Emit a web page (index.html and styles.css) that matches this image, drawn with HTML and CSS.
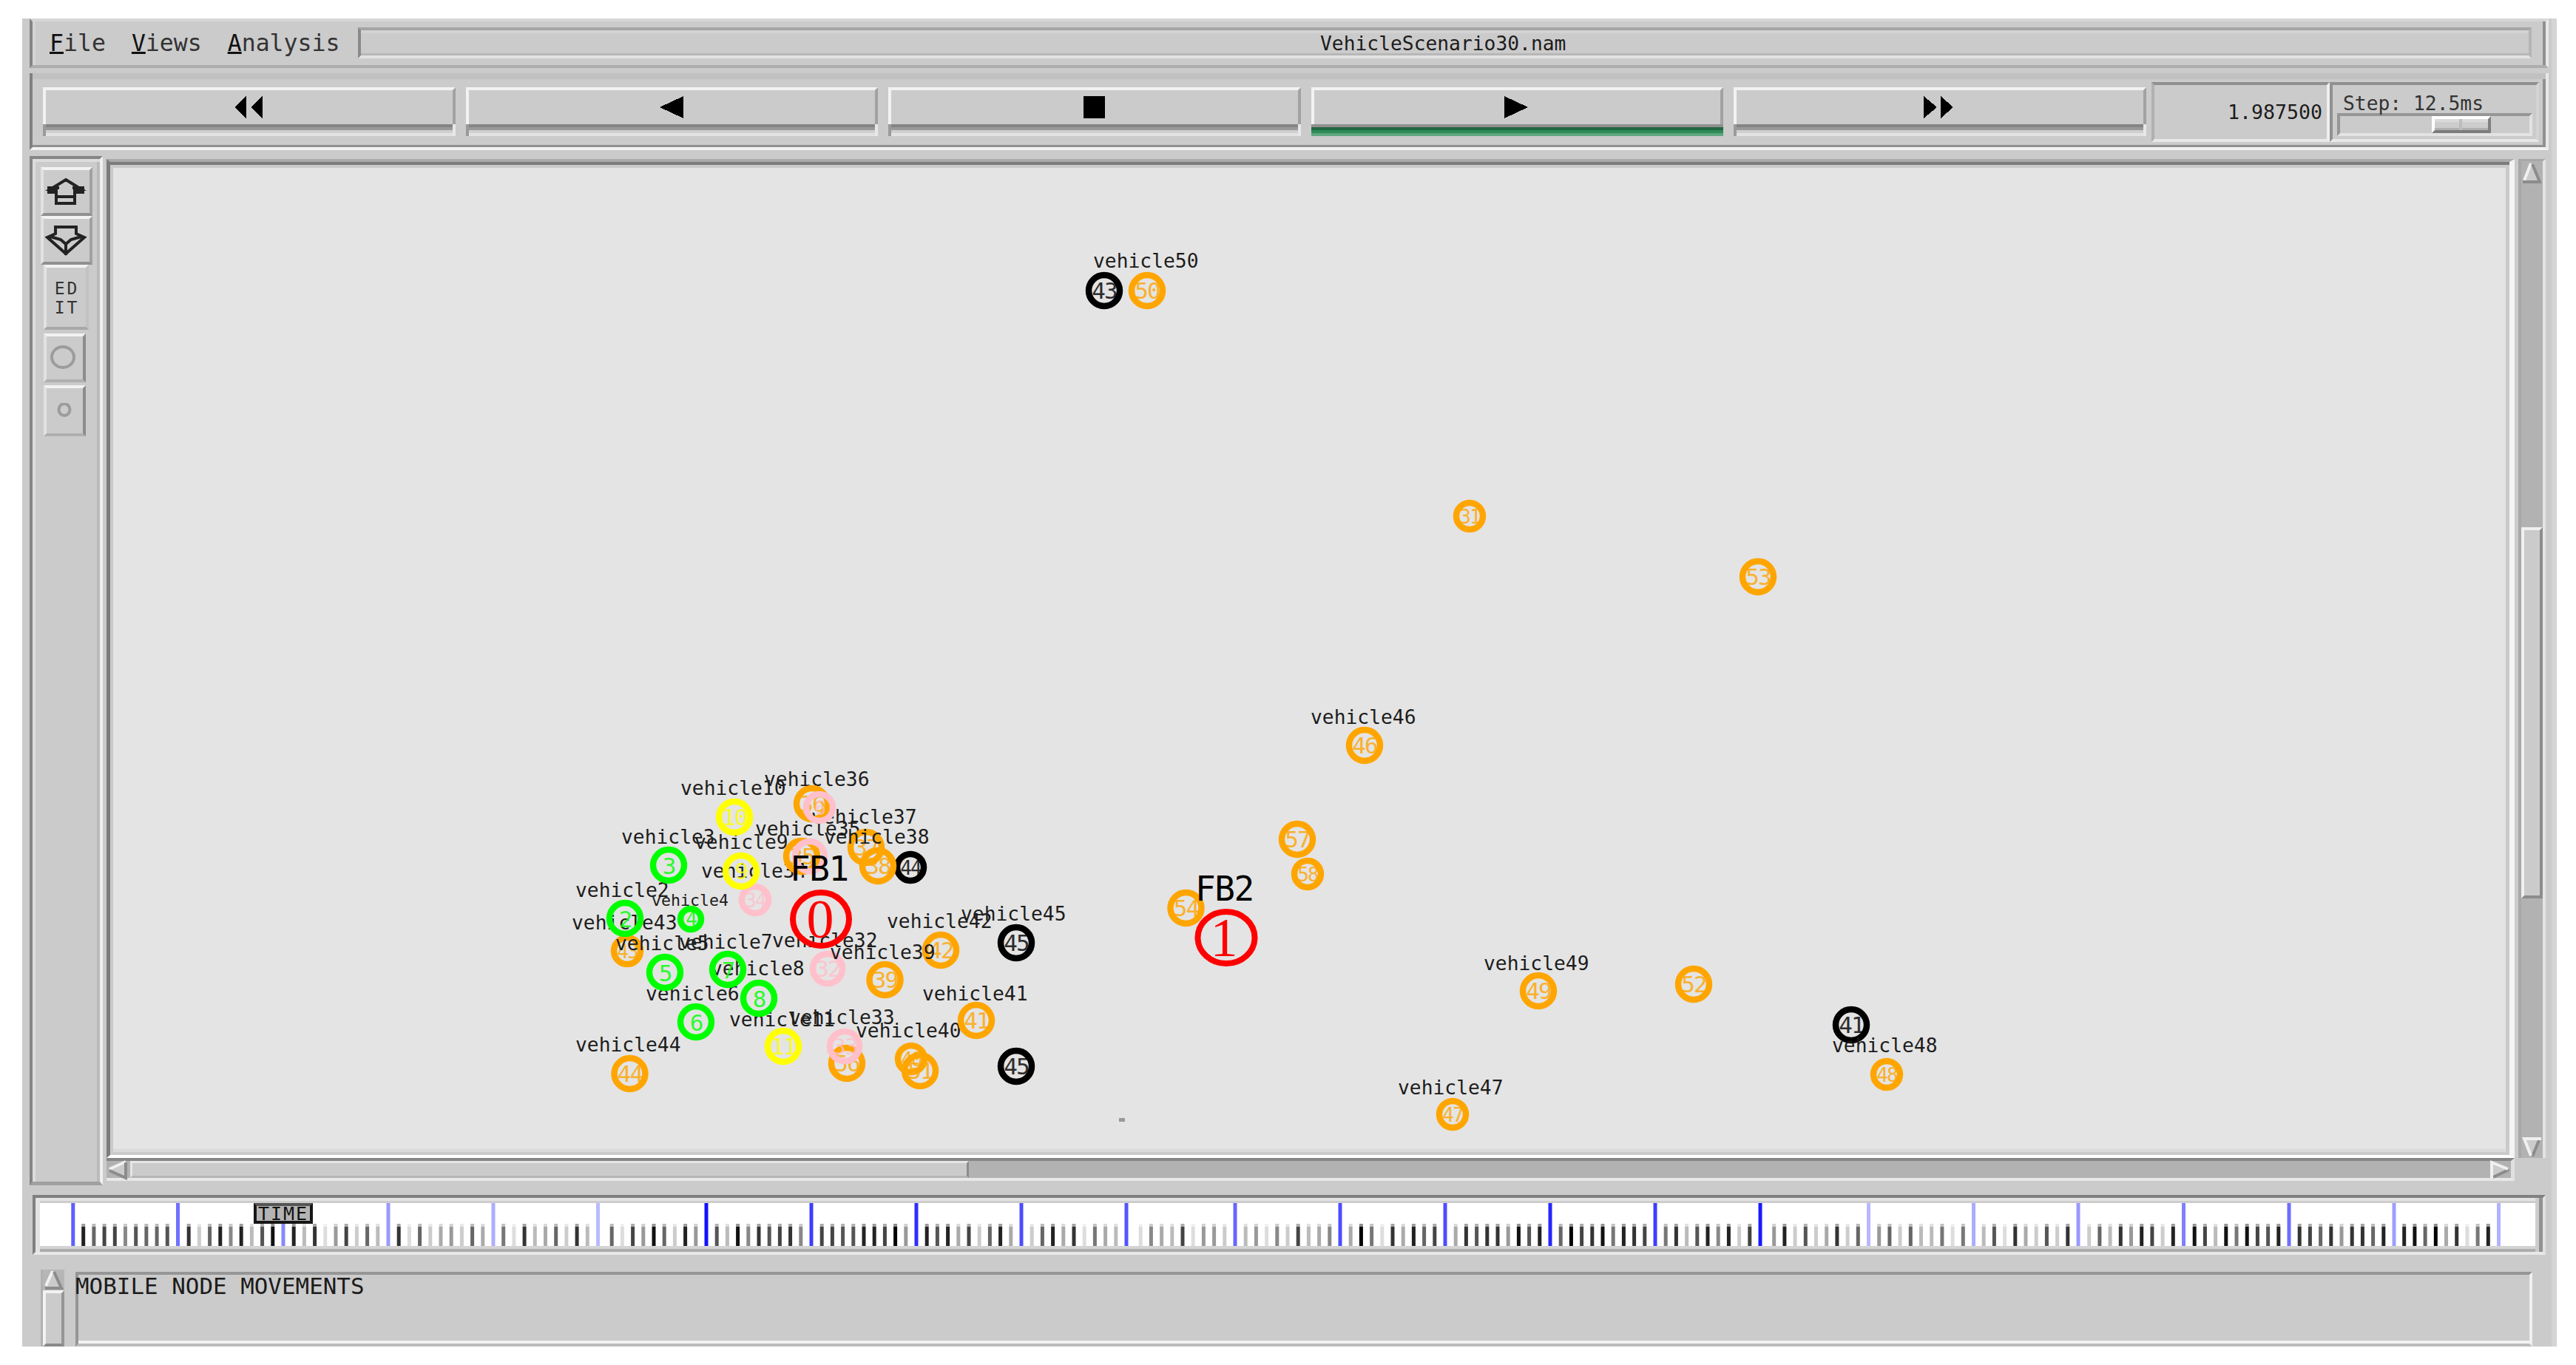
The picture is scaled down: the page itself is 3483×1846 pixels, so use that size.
FILE: index.html
```html
<!DOCTYPE html>
<html lang="en">
<head>
<meta charset="utf-8">
<title>nam: VehicleScenario30.nam</title>
<link rel="stylesheet" href="styles.css">
</head>
<body>
<div class="window">
  <header class="menubar">
    <span class="menu"><u>F</u>ile</span><span class="menu"><u>V</u>iews</span><span class="menu"><u>A</u>nalysis</span>
    <div class="filename">VehicleScenario30.nam</div>
  </header>
  <div class="toolbar">
    <div class="buttons">
      <div class="button"><div class="face"><svg width="40" height="30" shape-rendering="crispEdges"><path d="M0 15 16 0v30zM22 15 38 0v30z"/></svg></div><div class="strip"></div></div>
      <div class="button"><div class="face"><svg width="32" height="30" shape-rendering="crispEdges"><path d="M0 15 32 0v30z"/></svg></div><div class="strip"></div></div>
      <div class="button"><div class="face"><svg width="30" height="30"><path d="M0 0h29v30h-29z"/></svg></div><div class="strip"></div></div>
      <div class="button active"><div class="face"><svg width="36" height="30" shape-rendering="crispEdges"><path d="M32 15 0 0v30z"/></svg></div><div class="strip"></div></div>
      <div class="button"><div class="face"><svg width="44" height="30" shape-rendering="crispEdges"><path d="M18 15 0 0v30zM40 15 23 0v30z"/></svg></div><div class="strip"></div></div>
    </div>
    <div class="time">1.987500</div>
    <div class="step">
      <div class="step-label">Step: 12.5ms</div>
      <div class="trough"><div class="slider"></div></div>
    </div>
  </div>
  <main class="main">
    <aside class="tools">
      <div class="tool wide"><svg width="58" height="38" viewBox="0 0 58 38"><path d="M29 3 50 16H41V35H16V16H8ZM16 26H41" /><path d="M4 14H20M38 14H54M4 20H14M43 20H54"/></svg></div>
      <div class="tool wide"><svg width="58" height="42" viewBox="0 0 58 42"><path d="M15 3H43V12L54 17 29 39 4 17 15 12ZM8 16 22 20 29 26 36 20 50 16M29 26V41"/></svg></div>
      <div class="tool edit"><span>ED</span><span>IT</span></div>
      <div class="tool dim big"><svg width="38" height="34"><ellipse cx="18" cy="16" rx="15" ry="14"/></svg></div>
      <div class="tool dim small"><svg width="24" height="22"><ellipse cx="12" cy="9" rx="7.5" ry="8"/></svg></div>
    </aside>
    <div class="view">
      <div class="canvas">
        <svg class="network" viewBox="153 227 3235 1327" width="3235" height="1327">
          <g class="label">
            <text x="920" y="1075">vehicle10</text>
            <text x="1033" y="1063">vehicle36</text>
            <text x="840" y="1141">vehicle3</text>
            <text x="939" y="1148">vehicle9</text>
            <text x="1097" y="1114">vehicle37</text>
            <text x="1021" y="1130">vehicle35</text>
            <text x="948" y="1187">vehicle34</text>
            <text x="778" y="1213">vehicle2</text>
            <text class="mini" x="881" y="1225">vehicle4</text>
            <text x="773" y="1257">vehicle43</text>
            <text x="918" y="1283">vehicle7</text>
            <text x="1044" y="1281">vehicle32</text>
            <text x="961" y="1319">vehicle8</text>
            <text x="873" y="1353">vehicle6</text>
            <text x="986" y="1388">vehicle11</text>
            <text x="1067" y="1385">vehicle33</text>
            <text x="1157" y="1403">vehicle40</text>
            <text x="1199" y="1255">vehicle42</text>
            <text x="1299" y="1245">vehicle45</text>
            <text x="1247" y="1353">vehicle41</text>
            <text x="778" y="1422">vehicle44</text>
            <text x="1772" y="979">vehicle46</text>
            <text x="1890" y="1480">vehicle47</text>
            <text x="2006" y="1312">vehicle49</text>
            <text x="1478" y="362">vehicle50</text>
          </g>
          <g class="node orange">
            <circle cx="1098" cy="1087" r="21"/><text x="1098" y="1098">36</text>
            <circle cx="1084" cy="1158" r="21"/><text x="1084" y="1169">35</text>
            <circle cx="848" cy="1286" r="18"/><text class="s" x="848" y="1296">43</text>
            <circle cx="851.5" cy="1452" r="21"/><text x="851.5" y="1463">44</text>
            <circle cx="1171" cy="1146" r="21"/><text x="1171" y="1157">37</text>
            <circle cx="1272" cy="1285" r="21"/><text x="1272" y="1296">42</text>
            <circle cx="1196.500" cy="1325" r="21"/><text x="1196.500" y="1336">39</text>
            <circle cx="1320" cy="1380" r="21"/><text x="1320" y="1391">41</text>
            <circle cx="1232" cy="1432" r="18"/><text class="s" x="1232" y="1442">40</text>
            <circle cx="1244" cy="1448" r="21"/><text x="1244" y="1459">51</text>
            <circle cx="1845" cy="1008" r="21"/><text x="1845" y="1019">46</text>
            <circle cx="1754" cy="1135" r="21"/><text x="1754" y="1146">57</text>
            <circle cx="1768" cy="1182" r="18"/><text class="s" x="1768" y="1192">58</text>
            <circle cx="1603.500" cy="1228" r="21"/><text x="1603.500" y="1239">54</text>
            <circle cx="1964" cy="1507" r="18"/><text class="s" x="1964" y="1517">47</text>
            <circle cx="1987" cy="698" r="18"/><text class="s" x="1987" y="708">31</text>
            <circle cx="2377" cy="780" r="21"/><text x="2377" y="791">53</text>
            <circle cx="2080" cy="1340" r="21"/><text x="2080" y="1351">49</text>
            <circle cx="2290" cy="1331" r="21"/><text x="2290" y="1342">52</text>
            <circle cx="2551" cy="1453" r="18"/><text class="s" x="2551" y="1463">48</text>
            <circle cx="1551" cy="393" r="21"/><text x="1551" y="404">50</text>
            <circle cx="1145" cy="1438" r="21"/><text x="1145" y="1449">56</text>
          </g>
          <g class="node pink">
            <circle cx="1108" cy="1092" r="18"/><text class="s" x="1108" y="1102">6</text>
            <circle cx="1095" cy="1158" r="20"/>
            <circle cx="1021" cy="1217" r="18"/><text class="s" x="1021" y="1227">34</text>
            <circle cx="1119" cy="1310" r="20"/><text x="1119" y="1321">32</text>
            <circle cx="1142" cy="1415" r="20"/><text x="1142" y="1426">33</text>
          </g>
          <g class="node black">
            <circle cx="1231" cy="1173" r="18"/><text class="s" x="1231" y="1183">44</text>
            <circle cx="1374" cy="1275" r="21"/><text x="1374" y="1286">45</text>
            <circle cx="1374" cy="1442" r="21"/><text x="1374" y="1453">45</text>
            <circle cx="2503" cy="1386" r="21"/><text x="2503" y="1397">41</text>
            <circle cx="1493" cy="393" r="21"/><text x="1493" y="404">43</text>
          </g>
          <g class="node orange"><circle cx="1187" cy="1171" r="21"/><text x="1187" y="1182">38</text></g>
          <g class="node yellow">
            <circle cx="993" cy="1105" r="21"/><text x="993" y="1116">10</text>
            <circle cx="1002" cy="1178" r="21"/><text x="1002" y="1189">9</text>
            <circle cx="1059" cy="1415" r="21"/><text x="1059" y="1426">11</text>
          </g>
          <g class="node green">
            <circle cx="904" cy="1170" r="21"/><text x="904" y="1182">3</text>
            <circle cx="845" cy="1242" r="21"/><text x="845" y="1254">2</text>
            <circle cx="934" cy="1243" r="14"/><text class="s" x="934" y="1252">4</text>
            <circle cx="899" cy="1315" r="21"/><text x="899" y="1327">5</text>
            <circle cx="984" cy="1311" r="21"/><text x="984" y="1323">7</text>
            <circle cx="1026" cy="1350" r="21"/><text x="1026" y="1362">8</text>
            <circle cx="941" cy="1382" r="21"/><text x="941" y="1394">6</text>
          </g>
          <g class="base">
            <ellipse cx="1110" cy="1243" rx="38" ry="36"/><text x="1109" y="1268">0</text>
            <ellipse cx="1658" cy="1268" rx="38.500" ry="35"/><text x="1655" y="1293">1</text>
          </g>
          <g class="label">
            <text x="1114" y="1141">vehicle38</text>
            <text x="832" y="1285">vehicle5</text>
            <text x="1122" y="1297">vehicle39</text>
            <text x="2477" y="1423">vehicle48</text>
            <text class="station" x="1068" y="1191">FB1</text>
            <text class="station" x="1616" y="1218">FB2</text>
          </g>
          <rect x="1513" y="1512" width="8" height="5" fill="#999"/>
        </svg>
      </div>
      <div class="hscroll">
        <svg class="arrow" width="32" height="28"><path class="fill" d="M26 3V25L4 14Z"/><path class="lit" d="M4 13 26 3"/><path class="dark" d="M4 15 26 25V4"/></svg>
        <div class="hthumb"></div>
        <svg class="arrow end" width="32" height="28"><path class="fill" d="M7 3V25L28 14Z"/><path class="dark" d="M8 24 29 14"/><path class="lit" d="M6 25V4L28 13"/></svg>
      </div>
    </div>
    <div class="vscroll">
      <svg class="arrow" width="28" height="31"><path class="fill" d="M14 3 27 28H2Z"/><path class="lit" d="M13 3 4 26"/><path class="dark" d="M15 4 25 28H2"/></svg>
      <div class="vthumb"></div>
      <svg class="arrow end" width="28" height="28"><path class="fill" d="M14 27 27 2H2Z"/><path class="dark" d="M24 4 15 26"/><path class="lit" d="M27 2H4L13 25"/></svg>
    </div>
  </main>
  <div class="timeline">
    <svg id="ticks" viewBox="58 1627 3370 58" width="3370" height="58"></svg>
    <div class="marker">TIME</div>
  </div>
  <footer class="log">
    <div class="logscroll">
      <svg width="30" height="28"><path class="fill" d="M14 2 27 24H3Z"/><path class="lit" d="M13 2 4 22"/><path class="dark" d="M15 3 25 25H3"/></svg>
      <div class="logthumb"></div>
    </div>
    <div class="logtext">MOBILE NODE MOVEMENTS</div>
  </footer>
</div>
<script src="ticks.js"></script>
</body>
</html>
```
FILE: styles.css
```css
* { box-sizing: border-box; }
body {
  margin: 0;
  background: #fff;
  color: #1c1c1c;
  font-family: "DejaVu Sans Mono", "Liberation Mono", monospace;
  overflow: hidden;
}
svg { display: block; flex: none; }
.window {
  width: 3427px;
  height: 1796px;
  margin: 25px 0 0 30px;
  padding: 0 4px 0 10px;
  background: #cbcbcb;
  border-right: 7px solid #d4d4d4;
  display: flex;
  flex-direction: column;
}

/* menu bar */
.menubar {
  height: 67px;
  flex: none;
  display: flex;
  align-items: flex-start;
  gap: 35px;
  padding: 8px 19px 0 23px;
  border: 4px solid #d6d6d6;
  border-left-color: #858585;
  border-bottom-color: #adadad;
  border-right-color: #e8e8e8;
  box-shadow: inset -4px 0 #909090, inset 4px 0 #d4d4d4;
}
.menu { font-size: 31.5px; line-height: 43px; color: #333; }
.menu u { text-decoration-thickness: 3px; text-underline-offset: 1px; color: #111; }
.filename {
  flex: 1;
  height: 42px;
  margin-left: -10px;
  border: 4px solid #a5a5a5;
  border-left-color: #8a8a8a;
  border-right-color: #b5b5b5;
  border-bottom-color: #e3e3e3;
  box-shadow: inset 0 4px #d3d3d3, inset 0 -3px #b7b7b7;
  padding-right: 5px;
  text-align: center;
  font-size: 26.3px;
  line-height: 37px;
}

/* playback toolbar */
.toolbar {
  height: 104px;
  flex: none;
  margin-top: 7px;
  display: flex;
  padding: 12px 9px 0 14px;
  border-left: 4px solid #808080;
  border-right: 4px solid #e8e8e8;
  border-bottom: 4px solid #f2f2f2;
  box-shadow: inset 0 8px #c1c1c1, inset -4px -3px #909090;
}
.buttons {
  width: 2844px;
  display: grid;
  grid-template-columns: repeat(5, 1fr);
  gap: 14px;
  padding-top: 7px;
  margin-right: 7px;
}
.button {
  height: 66px;
  display: flex;
  flex-direction: column;
}
.face {
  height: 50px;
  display: flex;
  align-items: center;
  justify-content: center;
  border: 4px solid #f2f2f2;
  border-right-color: #a2a2a2;
  border-bottom: 0;
}
.strip {
  height: 16px;
  border-left: 4px solid #9a9a9a;
  border-right: 4px solid #e8e8e8;
  background: linear-gradient(#858585 0 4px, #999 4px 8px, #cfcfcf 8px 12px, #e3e3e3 12px);
}
.active .strip {
  border: 0;
  background: linear-gradient(#919191 0 4px, #236741 4px 8px, #2e8b57 8px 12px, #5fa67e 12px);
}
.time {
  width: 241px;
  height: 81px;
  border: 4px solid #909090;
  border-left-color: #b0b0b0;
  border-right-color: #efefef;
  border-bottom-color: #e8e8e8;
  padding: 21px 6px 0 0;
  text-align: right;
  font-size: 26.6px;
  line-height: 32px;
}
.step {
  flex: 1;
  height: 81px;
  border: 4px solid #909090;
  border-right-color: #d4d4d4;
  border-bottom-color: #e8e8e8;
  padding: 11px 5px 0 6px;
}
.step-label {
  height: 27px;
  padding-left: 8px;
  font-size: 26.3px;
  line-height: 28px;
  color: #333;
}
.trough {
  height: 31px;
  padding-left: 124px;
  border: 4px solid #969696;
  border-right-color: #e3e3e3;
  border-bottom-color: #e3e3e3;
}
.slider {
  width: 80px;
  height: 23px;
  border: 4px solid #fff;
  border-right-color: #808080;
  border-bottom-color: #7c7c7c;
  background: linear-gradient(90deg, transparent 33px, #bdbdbd 33px 37px, transparent 37px),
    linear-gradient(#dadada 0 4px, #cdcdcd 4px 12px, #b0b0b0 12px);
}

/* middle area */
.main {
  height: 1392px;
  flex: none;
  display: flex;
  margin-top: 8px;
}
.tools {
  width: 99px;
  border: 4px solid #868686;
  border-right-color: #f0f0f0;
  border-bottom: 5px solid #a0a0a0;
  box-shadow: inset 4px 4px #dcdcdc, inset -4px 0 #bababa;
  padding: 11px 0 0 15px;
}
.tool {
  width: 57px;
  height: 66px;
  display: flex;
  align-items: center;
  justify-content: center;
  border: 4px solid #f2f2f2;
  border-left-color: #e2e2e2;
  border-right-color: #a0a0a0;
  border-bottom-color: #909090;
}
.tool svg path { fill: none; stroke: #222; stroke-width: 4; }
.tool svg ellipse { fill: none; stroke: #9c9c9c; stroke-width: 4; }
.wide { width: 70px; margin-left: -4px; padding-right: 2px; }
.edit {
  width: 61px;
  height: 88px;
  margin-bottom: 5px;
  flex-direction: column;
  font-size: 23px;
  line-height: 26px;
  letter-spacing: 3px;
  padding-left: 2px;
  padding-top: 2px;
  border-right-color: #c2c2c2;
  border-bottom-color: #a8a8a8;
  color: #333;
}
.dim { border-bottom-color: #b0b0b0; border-right-color: #8c8c8c; }
.big { margin-bottom: 4px; padding-right: 4px; }
.small { height: 69px; padding-right: 1px; padding-top: 0; }
.view { width: 3256px; margin-left: 5px; padding-top: 4px; }
.canvas {
  height: 1351px;
  padding: 8px 4px 4px;
  background: #e4e4e4;
  border: 4px solid #7c7c7c;
  border-left-width: 5px;
  border-top-color: #aaa;
  border-right: 7px solid #f4f4f4;
  border-bottom: 4px solid #fff;
  box-shadow: inset 0 4px #7c7c7c, inset 4px 8px #cacaca, inset -5px -4px #cacaca, inset 0 -8px #dadada;
}
.network { margin: 0; overflow: hidden; }
.hscroll {
  height: 31px;
  display: flex;
  align-items: center;
  background: #b2b2b2;
  border-top: 4px solid #868686;
  border-bottom: 4px solid #e8e8e8;
  border-right: 5px solid #e0e0e0;
}
.hthumb {
  width: 1134px;
  height: 23px;
  background: #cbcbcb;
  border: 3px solid #e6e6e6;
  border-right-color: #8c8c8c;
  border-bottom-color: #b5b5b5;
}
.arrow.end { margin-left: auto; }
.fill { fill: #cbcbcb; }
.lit { fill: none; stroke: #f0f0f0; stroke-width: 4; }
.dark { fill: none; stroke: #8c8c8c; stroke-width: 4; }
.vscroll {
  width: 37px;
  height: 1351px;
  margin: 4px 0 0 5px;
  display: flex;
  flex-direction: column;
  background: #b2b2b2;
  border-left: 4px solid #a8a8a8;
  border-right: 4px solid #e4e4e4;
  border-top: 3px solid #a8a8a8;
}
.vthumb {
  height: 502px;
  margin-top: 464px;
  background: #cbcbcb;
  border: 4px solid #f0f0f0;
  border-right-color: #8c8c8c;
  border-bottom-color: #8c8c8c;
}
.vscroll .end { margin: auto 0 0; }

/* network nodes */
.label { font-size: 26.3px; fill: #1c1c1c; }
.label .mini { font-size: 21.600px; }
.label .station { font-size: 46px; letter-spacing: -1.5px; fill: #000; }
.node circle { fill: none; stroke: currentColor; stroke-width: 8.500px; }
.node text {
  fill: currentColor;
  font-size: 31px;
  letter-spacing: -2px;
  text-anchor: middle;
  opacity: .8;
}
.node .s { font-size: 26px; }
.orange { color: #ffa500; }
.pink { color: #ffc0cb; }
.black { color: #000; }
.yellow { color: #ff0; }
.green { color: #0f0; }
.base ellipse { fill: none; stroke: #f00; stroke-width: 8px; }
.base text {
  fill: #f00;
  font: 74px "Liberation Serif", serif;
  text-anchor: middle;
}

/* timeline */
.timeline {
  position: relative;
  flex: none;
  width: 3398px;
  height: 81px;
  margin: 13px 0 0 4px;
  padding: 7px 0 0 10px;
  border: 4px solid #808080;
  border-right-color: #e0e0e0;
  border-bottom-color: #e8e8e8;
  background: linear-gradient(#e3e3e3 0 4px, #cdcdcd 4px 7px, #fff 7px 65px, #d4d4d4 65px 69px, #adadad 69px);
  box-shadow: inset 6px 0 #e3e3e3, inset -5px 0 #929292, inset -10px 0 #cdcdcd;
}
.marker {
  position: absolute;
  left: 295px;
  top: 7px;
  width: 80px;
  height: 28px;
  background: #b4b4b4;
  border: 4px solid #161616;
  border-top-color: #555;
  font-size: 25px;
  line-height: 21px;
  letter-spacing: 2px;
  text-align: center;
  color: #111;
}

/* log */
.log {
  flex: none;
  height: 104px;
  margin-top: 20px;
  display: flex;
  padding: 0 22px 0 15px;
}
.logscroll {
  width: 32px;
  background: #b6b6b6;
  border-left: 3px solid #b0b0b0;
}
.logthumb {
  height: 76px;
  background: #cbcbcb;
  border: 4px solid #f2f2f2;
  border-right-color: #969696;
  border-bottom-color: #8a8a8a;
}
.logtext {
  flex: 1;
  height: 101px;
  margin: 3px 0 0 15px;
  padding: 0;
  border: 4px solid #969696;
  border-right-color: #f0f0f0;
  border-bottom: 4px solid #bcbcbc;
  box-shadow: inset 0 -4px #f2f2f2;
  font-size: 30.900px;
  line-height: 30px;
  text-indent: -4px;
}
```
FILE: ticks.js
```js
// Major tick positions with their strength, and the grey levels of the nine minor ticks after each.
const majors = [98.8, 240.5, 383, 525, 667, 808.5, 955, 1097, 1239, 1381, 1523, 1670,
  1812, 1954, 2096, 2238, 2380, 2526.5, 2668.5, 2810, 2952.5, 3095, 3237, 3378.5];
const strength = [.63, .56, .47, .4, .32, .27, .93, .76, .82, .7, .67, .6,
  .7, .7, .85, .76, .9, .28, .33, .4, .5, .57, .38, .3];
const minors = ["264485665", "3c6282b51", "2b3d94c6b", "3d6ca9c6a", "7d3ba6c3b", "6d4916c29",
  "5b1835438", "445522409", "252a4c62a", "c62a3d7ab", "d8ab4d99c", "b9d8c4ba8", "a07d3a264",
  "a35339152", "604317234", "73b5282c4", "92c5ca3c6", "96c6bb7d7", "b5d3ac5c3", "c6b3924c2",
  "14b171452", "346393362", "2160a3d72"];
const svg = document.getElementById("ticks");
function tick(x, y, w, h, fill, opacity) {
  const r = document.createElementNS("http://www.w3.org/2000/svg", "rect");
  const at = { x: x - w / 2, y, width: w, height: h, fill, opacity };
  for (const k in at) r.setAttribute(k, at[k]);
  svg.appendChild(r);
}
majors.forEach((x, i) => tick(x, 1627, 5, 58, "#00f", strength[i]));
minors.forEach((row, i) => [...row].forEach((c, k) => {
  const x = majors[i + 1] - 14.2 * (9 - k);
  const alpha = 1 - parseInt(c, 16) / 15;
  tick(x, 1655, 5, 4, "#000", alpha * .45);
  tick(x, 1659, 5, 26, "#000", alpha);
}));
```
